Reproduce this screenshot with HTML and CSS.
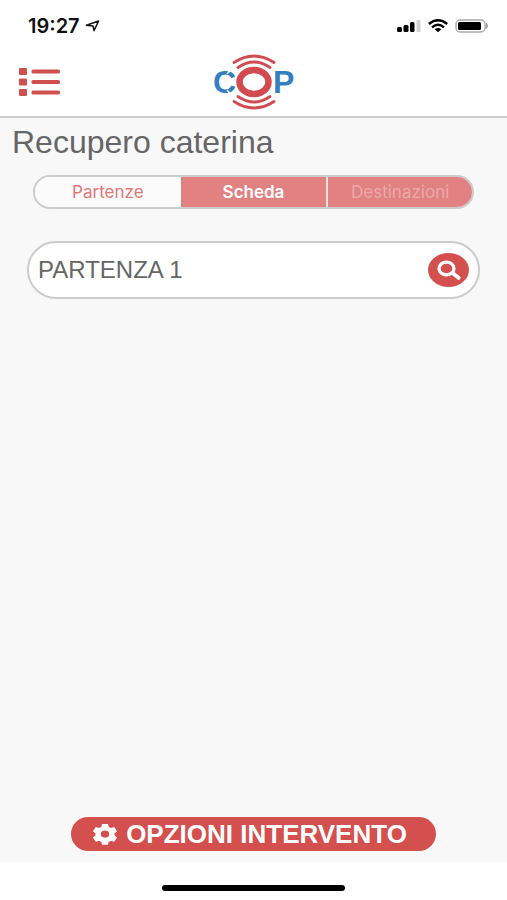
FILE: index.html
```html
<!DOCTYPE html>
<html lang="it">
<head>
<meta charset="utf-8">
<meta name="viewport" content="width=device-width, initial-scale=1">
<title>Recupero caterina</title>
<link rel="stylesheet" href="styles.css">
</head>
<body>
<header class="top">
  <div class="status">
    <div class="clock">
      <span>19:27</span>
      <svg width="15" height="12" viewBox="0 0 15 12" aria-hidden="true"><path d="M13.600 1 9 10.600 8 6 1.400 5.300Z" fill="none" stroke="#111" stroke-width="1.500" stroke-linejoin="round"/></svg>
    </div>
    <div class="signals">
      <svg width="24" height="14" viewBox="0 0 24 14" aria-hidden="true"><g fill="#000"><rect x="0" y="8" width="5" height="5" rx="1.500"/><rect x="6.500" y="6" width="5" height="7" rx="1.500"/><rect x="13" y="3" width="4.500" height="10" rx="1.500"/></g><rect x="19.500" y="1" width="4" height="12" rx="1" fill="#d2d2d2"/></svg>
      <svg width="20" height="14" viewBox="0 0 20 14" aria-hidden="true"><g fill="none" stroke="#000" stroke-width="2.300"><path d="M.8 5Q10-2.400 19.200 5"/><path d="M4 8.300Q10 3.300 16 8.300"/></g><path d="M6.600 10.200Q10 7.800 13.400 10.200L10 13.200Z"/></svg>
      <svg width="34" height="14" viewBox="0 0 34 14" aria-hidden="true"><rect x="1" y="1" width="29" height="12" rx="4" fill="#fff" stroke="#aaa" stroke-width="1.500"/><rect x="3" y="3" width="23" height="8" rx="1.500"/><path d="M31.500 4.500q2 2.500 0 5Z" fill="#999" stroke="#999"/></svg>
    </div>
  </div>
  <div class="bar">
    <button class="menu" type="button" aria-label="Menu">
      <svg width="41" height="28" viewBox="0 0 41 28" aria-hidden="true"><g fill="#cf504f"><rect width="8" height="7" rx="1"/><rect y="10.500" width="8" height="7" rx="1"/><rect y="21" width="8" height="7" rx="1"/><rect x="12.500" y="1.500" width="28.500" height="4" rx="1.500"/><rect x="12.500" y="12" width="28.500" height="4" rx="1.500"/><rect x="12.500" y="22.500" width="28.500" height="4" rx="1.500"/></g></svg>
    </button>
    <svg width="82" height="56" viewBox="0 0 82 56" role="img" aria-label="COP">
      <text class="logo-text" x="0" y="39">C</text>
      <path d="M14 20 19 14M14 36 19 42" stroke="#fff" stroke-width="1.500"/>
      <ellipse cx="41" cy="28" rx="19.500" ry="16.500" fill="#fff"/>
      <text class="logo-text" x="60" y="39">P</text>
      <ellipse cx="41" cy="28" rx="14.500" ry="12" fill="none" stroke="#d14b50" stroke-width="6.500"/>
      <g fill="none" stroke="#d14b50" stroke-width="2.800" stroke-linecap="round">
        <path d="M21 8.500Q41-4.500 61 8.500"/><path d="M25 13.500Q41 2.500 57 13.500"/>
        <path d="M25 42.500Q41 53.500 57 42.500"/><path d="M21 47.500Q41 60.500 61 47.500"/>
      </g>
    </svg>
  </div>
</header>
<main class="page">
  <h1>Recupero caterina</h1>
  <nav class="tabs" aria-label="Sezioni">
    <button class="tab tab-light" type="button">Partenze</button>
    <button class="tab" type="button">Scheda</button>
    <button class="tab tab-disabled" type="button" disabled>Destinazioni</button>
  </nav>
  <section class="place">
    <span>PARTENZA 1</span>
    <button class="search" type="button" aria-label="Cerca">
      <svg width="24" height="20" viewBox="0 0 24 20" aria-hidden="true"><ellipse cx="9.500" cy="8.500" rx="7.500" ry="6.300" fill="none" stroke="#fff" stroke-width="3.300"/><path d="M15.500 13 21.500 17.800" stroke="#fff" stroke-width="4" stroke-linecap="round"/></svg>
    </button>
  </section>
  <button class="options" type="button">
    <svg width="26" height="22" viewBox="0 0 24 24" preserveAspectRatio="none" aria-hidden="true"><path fill="#fff" fill-rule="evenodd" d="M9.300 1h5.400l.7 3.200 2 1.200 3.100-1 2.700 4.700-2.400 2.100v2.400l2.400 2.200-2.700 4.600-3.100-1-2 1.200-.7 3.200H9.300l-.7-3.200-2-1.200-3.100 1L.8 15.800l2.400-2.200v-2.400L.8 9.100l2.700-4.700 3.100 1 2-1.200ZM12 8.200a3.900 3.900 0 1 0 0 7.800 3.900 3.900 0 0 0 0-7.800Z"/></svg>
    <span>OPZIONI INTERVENTO</span>
  </button>
</main>
<footer class="home"><div class="home-line"></div></footer>
</body>
</html>
```
FILE: styles.css
```css
* { box-sizing: border-box; }

body {
  margin: 0;
  min-height: 100vh;
  display: flex;
  flex-direction: column;
  background: #fff;
  color: #666;
  font-family: "Liberation Sans", Arial, sans-serif;
}

button {
  margin: 0;
  padding: 0;
  border: 0;
  background: none;
  color: inherit;
  font: inherit;
}

svg { display: block; flex: none; }

.top { border-bottom: 2px solid #ccc; }

.status {
  display: flex;
  align-items: center;
  justify-content: space-between;
  padding: 16px 18px 0 28px;
}

.clock {
  display: flex;
  align-items: center;
  gap: 5px;
  color: #111;
  font: 600 20px/20px Inter, sans-serif;
}

.signals { display: flex; align-items: center; gap: 7px; }

.bar {
  display: grid;
  grid-template-columns: 1fr auto 1fr;
  align-items: center;
  padding: 18px 19px 6px;
}

.menu { justify-self: start; }

.logo-text {
  fill: #347fc2;
  font: 700 32px "Liberation Sans", Arial, sans-serif;
}

.page {
  flex: 1;
  display: flex;
  flex-direction: column;
  padding: 7px 12px 11px;
  background: #f8f8f8;
}

h1 {
  margin: 0;
  font-size: 32px;
  line-height: 34px;
  font-weight: 400;
}

.tabs {
  display: grid;
  grid-template-columns: repeat(3, 1fr);
  margin: 16px 21px 0;
  height: 34px;
  border: 2px solid #ccc;
  border-radius: 17px;
  overflow: hidden;
}

.tab {
  background: #e18181;
  color: #fff;
  font: 600 17px/28px Inter, sans-serif;
}

.tab-light { background: #fbfbfb; color: #dc7878; font-weight: 400; }

.tab-disabled { border-left: 2px solid #f5dede; color: #eca9a9; font-weight: 400; }

.place {
  display: flex;
  align-items: center;
  justify-content: space-between;
  margin: 32px 15px 0;
  height: 58px;
  padding: 0 9px;
  border: 2px solid #ccc;
  border-radius: 29px;
  background: #fff;
  font-size: 24px;
}

.search {
  display: grid;
  place-items: center;
  width: 41px;
  height: 34px;
  border-radius: 50%;
  background: #d4504e;
}

.options {
  display: flex;
  align-items: center;
  justify-content: center;
  gap: 8px;
  width: 72%;
  min-width: 365px;
  height: 34px;
  margin: auto auto 0;
  padding-right: 8px;
  border-radius: 17px;
  background: #d4504e;
  color: #fff;
  font-size: 26px;
  font-weight: 700;
}

.home { display: flex; justify-content: center; padding: 23px 0 9px; }

.home-line {
  width: 36%;
  height: 6px;
  border-radius: 3px;
  background: #000;
}
```
